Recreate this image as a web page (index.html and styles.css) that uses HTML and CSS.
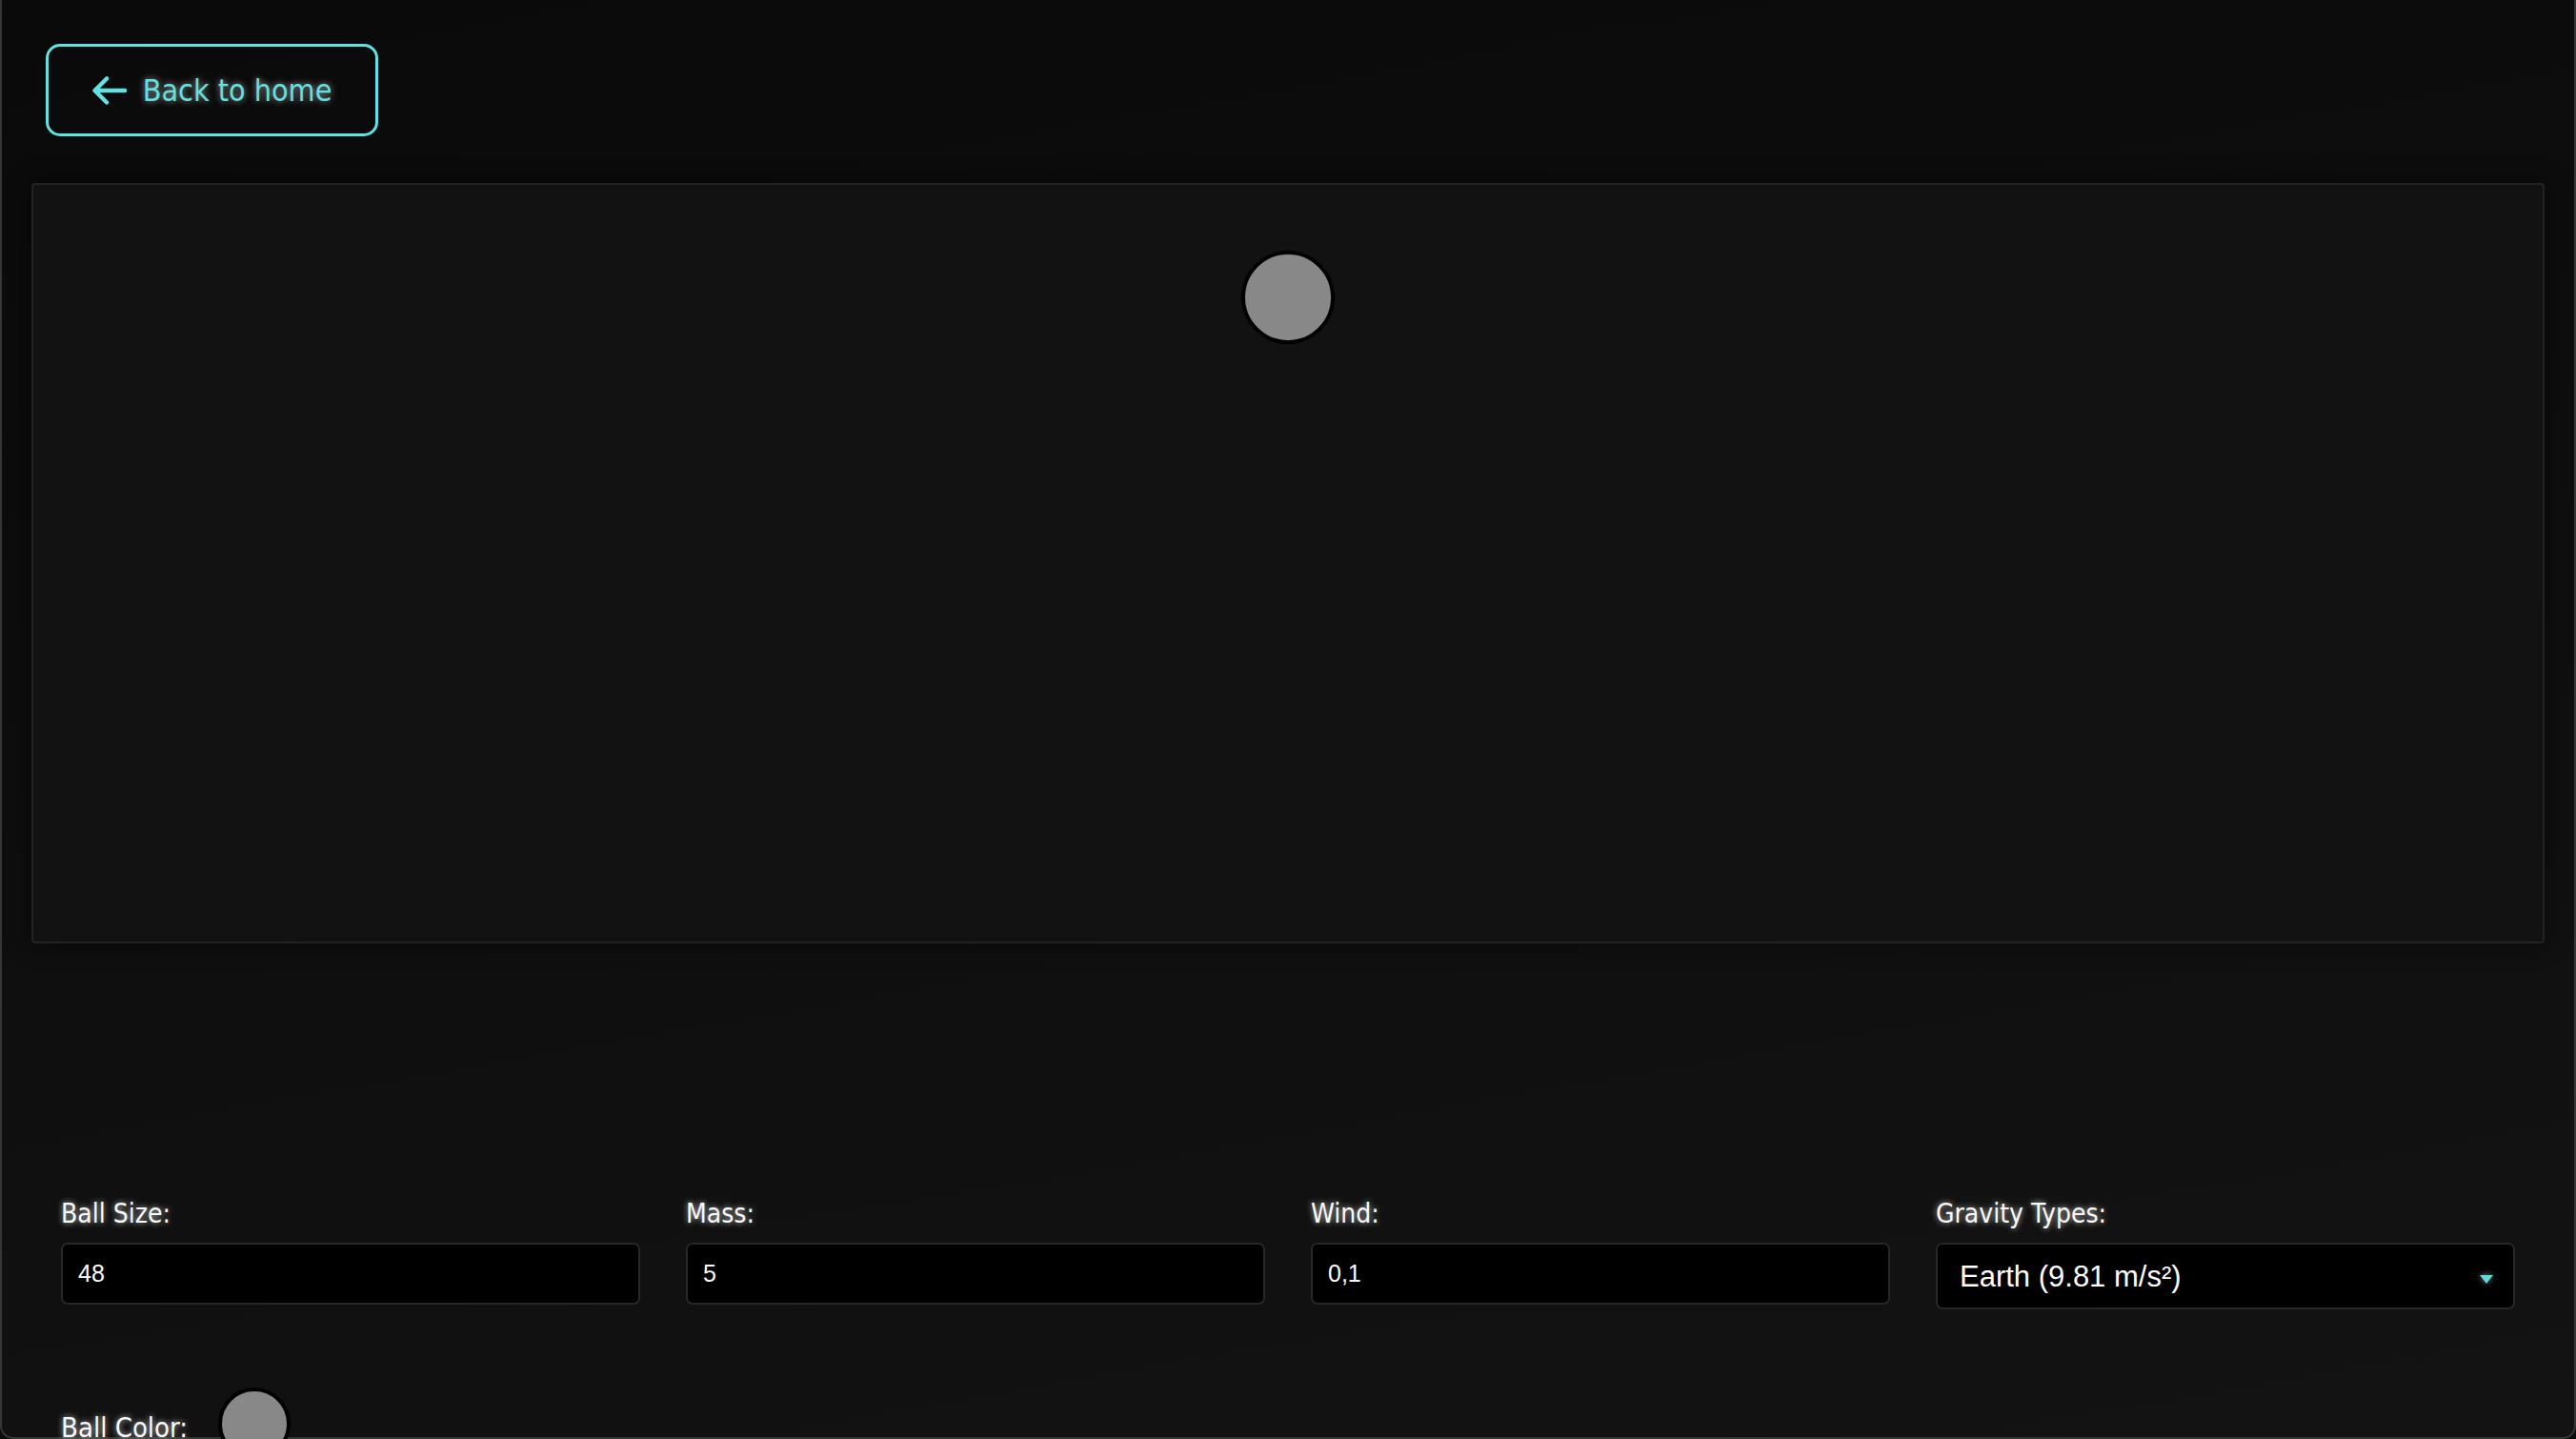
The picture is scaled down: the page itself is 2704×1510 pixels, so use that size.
FILE: index.html
```html
<!DOCTYPE html>
<html lang="en">
<head>
    <meta charset="UTF-8" />
    <meta name="viewport" content="width=device-width, initial-scale=1" />
    <title>Gravity Playground</title>
    <link rel="stylesheet" href="styles.css">
</head>
<body>
    <div class="app">
        <button class="back-btn">
            <svg class="back-icon" width="36" height="30" viewBox="0 0 36 30">
                <path d="M34 15H3M15 2.5L2.5 15L15 27.5" fill="none" stroke="currentColor" stroke-width="4.5" stroke-linecap="round" stroke-linejoin="round"/>
            </svg>
            <span class="back-text">Back to home</span>
        </button>

        <!-- Simulation area -->
        <div class="sim-canvas">
            <div class="ball"></div>
        </div>

        <!-- Controls -->
        <div class="controls">
            <div class="field">
                <label class="field-label">Ball Size:</label>
                <input class="field-input" type="text" value="48" />
            </div>
            <div class="field">
                <label class="field-label">Mass:</label>
                <input class="field-input" type="text" value="5" />
            </div>
            <div class="field">
                <label class="field-label">Wind:</label>
                <input class="field-input" type="text" value="0,1" />
            </div>
            <div class="field">
                <label class="field-label">Gravity Types:</label>
                <div class="select-wrap">
                    <select class="field-select">
                        <option>Earth (9.81 m/s²)</option>
                        <option>Moon (1.62 m/s²)</option>
                        <option>Mars (3.71 m/s²)</option>
                        <option>Jupiter (24.79 m/s²)</option>
                    </select>
                    <span class="select-arrow"></span>
                </div>
            </div>
        </div>

        <div class="color-row">
            <label class="field-label color-label">Ball Color:</label>
            <div class="color-swatch"></div>
        </div>
    </div>
</body>
</html>
```

FILE: styles.css
```css
html {
    overflow: hidden;
}
body {
    margin: 0;
    background-color: #0b0b0b;
    font-family: 'DejaVu Sans Condensed', 'DejaVu Sans', sans-serif;
    font-stretch: condensed;
    color: #f4f4f4;
}
.app {
    height: 1510px;
    box-sizing: border-box;
    border: 2px solid #363636;
    border-top: none;
    border-radius: 0 0 14px 14px;
    padding: 46px 31px 0 31px;
    background: linear-gradient(170deg, #0a0a0a 0%, #0f0f0f 55%, #131313 100%);
}
.back-btn {
    display: flex;
    align-items: center;
    justify-content: center;
    gap: 17px;
    width: 349px;
    height: 97px;
    margin-left: 15px;
    padding: 0;
    background: transparent;
    border: 3px solid #62e1e3;
    border-radius: 15px;
    color: #62e1e3;
    font-family: inherit;
    font-stretch: condensed;
    font-size: 32px;
    cursor: pointer;
}
.back-icon {
    display: block;
    flex: none;
}
.back-text {
    text-shadow: 0 0 7px rgba(255, 255, 255, 0.6);
}
.sim-canvas {
    position: relative;
    height: 798px;
    margin-top: 49px;
    box-sizing: border-box;
    background-color: #121212;
    border: 2px solid #232323;
    border-radius: 4px;
    box-shadow: 0 0 24px rgba(0, 0, 0, 0.6);
}
.ball {
    position: absolute;
    top: 69px;
    left: 50%;
    width: 98px;
    height: 98px;
    margin-left: -49px;
    box-sizing: border-box;
    border-radius: 50%;
    background-color: #888888;
    border: 4px solid #000;
}
.controls {
    display: grid;
    grid-template-columns: repeat(4, 1fr);
    column-gap: 48px;
    align-items: start;
    margin-top: 267px;
    padding: 0 31px;
}
.field-label {
    display: block;
    font-size: 28px;
    line-height: 34px;
    color: #fafafa;
    text-shadow: 0 0 6px rgba(255, 255, 255, 0.75);
}
.field-input,
.field-select {
    display: block;
    width: 100%;
    margin-top: 13px;
    box-sizing: border-box;
    background-color: #000;
    border: 2px solid #272727;
    border-radius: 7px;
    color: #fff;
    font-family: 'Liberation Sans', Arial, sans-serif;
    outline: none;
}
.field-input {
    height: 65px;
    padding: 0 16px;
    font-size: 25px;
}
.select-wrap {
    position: relative;
}
.field-select {
    -webkit-appearance: none;
    appearance: none;
    height: 70px;
    padding: 0 60px 0 23px;
    font-size: 31px;
}
.select-arrow {
    position: absolute;
    right: 23px;
    top: 34px;
    width: 0;
    height: 0;
    border-left: 7px solid transparent;
    border-right: 7px solid transparent;
    border-top: 9px solid #5fd9dc;
    filter: drop-shadow(0 0 3px rgba(255, 255, 255, 0.5));
    pointer-events: none;
}
.color-row {
    display: flex;
    align-items: center;
    gap: 32px;
    margin-top: 82px;
    padding: 0 31px;
}
.color-label {
    font-size: 29px;
    margin-top: 8px;
}
.color-swatch {
    flex: none;
    width: 76px;
    height: 76px;
    box-sizing: border-box;
    border-radius: 50%;
    background-color: #888888;
    border: 4px solid #000;
    cursor: pointer;
}
```
